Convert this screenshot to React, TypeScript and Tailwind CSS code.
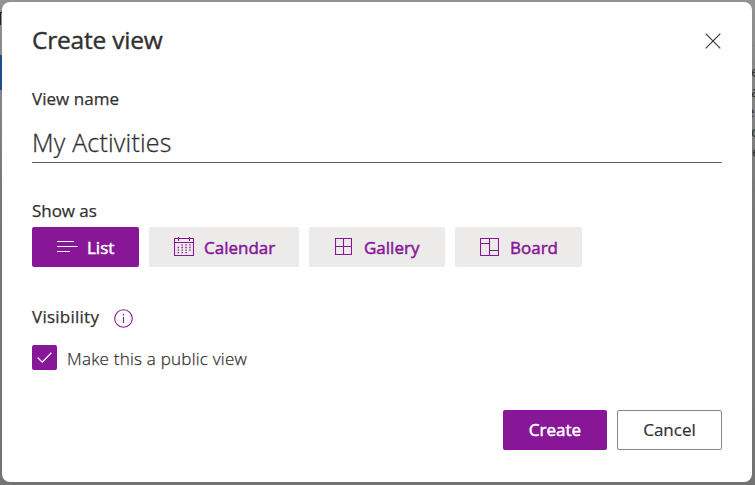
import type { ReactNode } from 'react';

const crisp = { fill: 'none', stroke: 'currentColor', strokeWidth: 1 } as const;

function ListIcon() {
  return (
    <svg width="21" height="13" viewBox="0 0 21 13" className="mb-px block" {...crisp}>
      <path d="M0 1.5H17M0 6.5H20.5M0 11.5H13" strokeWidth="1.1" />
    </svg>
  );
}

function CalendarIcon() {
  return (
    <svg width="20" height="19" viewBox="0 0 20 19" className="mb-px block" {...crisp}>
      <path d="M.5 1.5h19v17H.5zM.5 5.5h19M4.5 0v4M15.5 0v4" strokeWidth="1.1" />
      <path d="M7.4 7.9h9.5M3.6 10.5h13.3M3.6 13.1h13.3M3.6 15.7h9.5" strokeWidth="1.3" strokeDasharray="1.4 2.5" />
    </svg>
  );
}

function GalleryIcon() {
  return (
    <svg width="17" height="17" viewBox="0 0 17 17" className="mb-px block" {...crisp}>
      <path d="M.5.5h16v16H.5zM8.5.5v16M.5 8.5h16" strokeWidth="1.1" />
    </svg>
  );
}

function BoardIcon() {
  return (
    <svg width="19" height="18" viewBox="0 0 19 18" className="block" {...crisp}>
      <path d="M.5.5h18v17H.5zM9.5.5v17M.5 5.5h9M9.5 12.5h9" strokeWidth="1.1" />
    </svg>
  );
}

type ViewButtonProps = { icon: ReactNode; label: string; className: string; labelClass: string };

function ViewButton({ icon, label, className, labelClass }: ViewButtonProps) {
  return (
    <button className={`flex h-10 items-center rounded-[2px] ${className}`}>
      {icon}
      <span className={`pt-px text-[17px] leading-6 whitespace-nowrap [-webkit-text-stroke:0.5px_currentColor] ${labelClass}`}>{label}</span>
    </button>
  );
}

export default function App() {
  return (
    <div className="relative h-[485px] w-[755px] overflow-hidden bg-linear-to-b from-[#929292] via-[#787878] via-40% to-[#737373] font-['Open_Sans','Noto_Sans',sans-serif] text-[#323130]">
      <div className="absolute top-[12px] left-0 h-px w-[2px] bg-[#202020]" />
      <div className="absolute top-[12px] left-0 h-[13px] w-px bg-[#202020]" />
      <div className="absolute top-[55px] left-0 h-[35px] w-[2px] bg-[#1f4c8a]" />
      <div className="absolute top-[45px] left-0 h-px w-full bg-[#858585]" />
      <div className="absolute top-[61px] left-[751px] text-[15px] leading-5 text-[#303030]">
        <div>e</div>
        <div>a</div>
        <div className="-ml-[5px]">e</div>
        <div>o</div>
        <div className="ml-px">e</div>
      </div>

      <section className="absolute top-[2px] left-[2px] flex h-[480px] w-[750px] flex-col rounded-lg bg-white pr-[30px] pl-[30px]">
        <header className="flex h-[78px] items-start justify-between pt-[22px]">
          <h1 className="text-[24.5px] leading-8 tracking-[-0.2px] [-webkit-text-stroke:0.4px_currentColor]">Create view</h1>
          <svg width="16" height="16" viewBox="0 0 16 16" className="mt-[9px] mr-[1px]" {...crisp}>
            <path d="M.7.7l14.6 14.6M15.3.7L.7 15.3" strokeWidth="1.1" />
          </svg>
        </header>

        <label className="block h-[42px] pt-[7px] text-[17px] leading-6 tracking-[0.05px] [-webkit-text-stroke:0.25px_currentColor]">View name</label>
        <div className="h-[41px] border-b border-[#605e5c] pt-[4px] text-[25px] leading-8 font-light tracking-[0.2px] [-webkit-text-stroke:0.3px_currentColor]">My Activities</div>

        <h2 className="mt-[34px] h-[30px] pt-[2px] text-[17px] leading-6 tracking-[-0.05px] [-webkit-text-stroke:0.25px_currentColor]">Show as</h2>
        <div className="flex gap-[10px]">
          <ViewButton icon={<ListIcon />} label="List" className="w-[107px] bg-[#881798] pl-[25px] text-white" labelClass="pl-[9px]" />
          <ViewButton icon={<CalendarIcon />} label="Calendar" className="w-[150px] bg-[#edebe9] pl-[25px] text-[#881798]" labelClass="pl-[10px]" />
          <ViewButton icon={<GalleryIcon />} label="Gallery" className="w-[136px] bg-[#edebe9] pl-[26px] text-[#881798]" labelClass="pl-[12px]" />
          <ViewButton icon={<BoardIcon />} label="Board" className="w-[127px] bg-[#edebe9] pl-[25px] text-[#881798]" labelClass="pl-[11px]" />
        </div>

        <div className="mt-[38px] flex h-[40px] items-start">
          <h2 className="w-[82px] text-[17px] leading-6 tracking-[0.25px] [-webkit-text-stroke:0.25px_currentColor]">Visibility</h2>
          <svg width="19" height="19" viewBox="0 0 19 19" className="mt-[4px] text-[#881798]" {...crisp}>
            <circle cx="9.5" cy="9.5" r="8.8" strokeWidth="1.1" />
            <path d="M9.5 8v6M9.5 5v1.4" strokeWidth="1.1" />
          </svg>
        </div>
        <div className="flex h-[25px] items-center">
          <div className="flex size-[25px] items-center justify-center rounded-[2px] bg-[#881798] text-white">
            <svg width="15" height="11" viewBox="0 0 15 11" {...crisp}>
              <path d="M.6 5.5l4.6 4.6L14.4.8" strokeWidth="1.3" />
            </svg>
          </div>
          <span className="pt-[2px] pl-[10px] text-[17px] leading-6 font-light tracking-[0.23px] whitespace-nowrap [-webkit-text-stroke:0.25px_currentColor]">Make this a public view</span>
        </div>

        <footer className="mt-10 flex justify-end gap-[10px] text-[17px] leading-6">
          <button className="h-10 w-[104px] rounded-[2px] bg-[#881798] pb-px text-white [-webkit-text-stroke:0.5px_currentColor]">Create</button>
          <button className="h-10 w-[105px] rounded-[2px] border border-[#8a8886] pb-px [-webkit-text-stroke:0.2px_currentColor]">Cancel</button>
        </footer>
      </section>
    </div>
  );
}
